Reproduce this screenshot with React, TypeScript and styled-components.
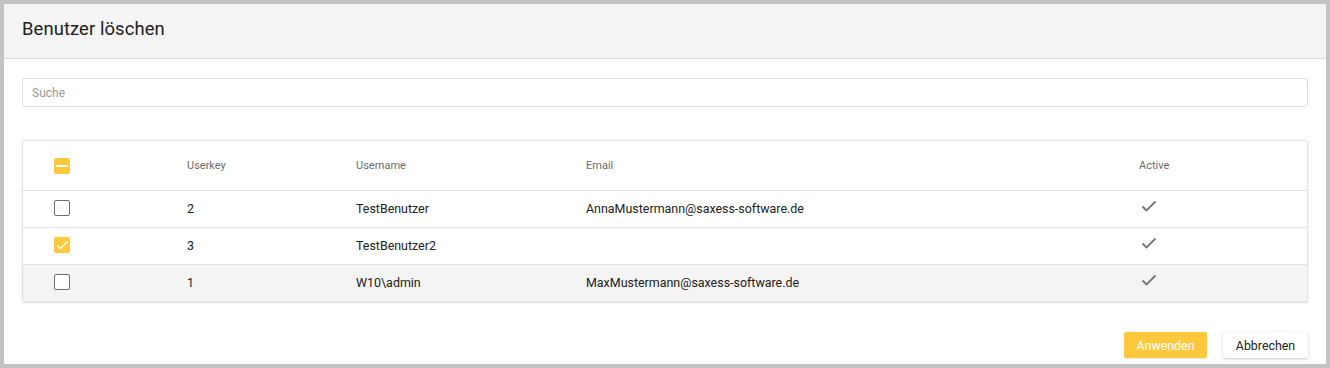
import React from "react";
import styled, { createGlobalStyle } from "styled-components";

const Global = createGlobalStyle`
  html, body { margin: 0; padding: 0; }
  body { font-family: Roboto, "Liberation Sans", Arial, sans-serif; background: #c3c3c3; }
  * { box-sizing: border-box; }
`;

const Frame = styled.div`
  width: 1330px;
  height: 368px;
  padding: 4px;
  background: #c3c3c3;
`;

const Dialog = styled.div`
  width: 1322px;
  height: 360px;
  background: #ffffff;
  display: flex;
  flex-direction: column;
`;

const Header = styled.div`
  height: 55px;
  background: #f4f4f4;
  border-bottom: 1px solid #dcdcdc;
  display: flex;
  align-items: center;
  padding: 0 18px 5px;
`;

const Title = styled.h1`
  margin: 0;
  font-size: 18.4px;
  font-weight: 400;
  color: #212121;
  letter-spacing: 0.1px;
`;

const Body = styled.div`
  padding: 19px 18px 0;
  display: flex;
  flex-direction: column;
`;

const Search = styled.input`
  height: 29px;
  width: 100%;
  border: 1px solid #e0e0e0;
  border-radius: 3px;
  padding: 0 9px;
  font-family: Roboto, "Liberation Sans", Arial, sans-serif;
  font-size: 12px;
  color: #212121;
  outline: none;
  &::placeholder { color: #9a9a9a; }
`;

const Table = styled.div`
  margin-top: 33px;
  border: 1px solid #e2e2e2;
  border-radius: 2px;
  box-shadow: 0 1px 2px rgba(0, 0, 0, 0.14);
`;

const Row = styled.div<{ $head?: boolean; $shade?: boolean }>`
  display: grid;
  grid-template-columns: 164px 169px 230px 553px 1fr;
  align-items: center;
  height: ${(p) => (p.$head ? "50px" : "37px")};
  padding-bottom: ${(p) => (p.$head ? "0" : "2px")};
  background: ${(p) => (p.$shade ? "#f4f4f4" : "#ffffff")};
  border-bottom: 1px solid #e0e0e0;
  &:last-child { border-bottom: none; height: 36px; }
  font-size: ${(p) => (p.$head ? "11px" : "12.45px")};
  color: ${(p) => (p.$head ? "#6b6b6b" : "#212121")};
`;

const CheckCell = styled.div`
  padding-left: 31px;
  display: flex;
  align-items: center;
`;

const Cell = styled.div`
  white-space: nowrap;
`;

const ActiveCell = styled.div<{ $head?: boolean }>`
  padding-left: ${(p) => (p.$head ? "0" : "2px")};
  padding-bottom: ${(p) => (p.$head ? "0" : "5px")};
  display: flex;
  align-items: center;
`;

const Box = styled.span<{ $on?: boolean }>`
  width: 16px;
  height: 16px;
  border-radius: 2px;
  display: inline-flex;
  align-items: center;
  justify-content: center;
  background: ${(p) => (p.$on ? "#ffc83d" : "#ffffff")};
  border: ${(p) => (p.$on ? "none" : "1.5px solid #6e6e6e")};
`;

const Footer = styled.div`
  display: flex;
  justify-content: flex-end;
  gap: 16px;
  margin-top: 30px;
`;

const Button = styled.button<{ $primary?: boolean }>`
  height: 26px;
  width: ${(p) => (p.$primary ? "83px" : "85px")};
  padding: 0;
  border: none;
  border-radius: 2px;
  font-family: Roboto, "Liberation Sans", Arial, sans-serif;
  font-size: 12.4px;
  background: ${(p) => (p.$primary ? "#ffc83d" : "#ffffff")};
  color: ${(p) => (p.$primary ? "#ffffff" : "#212121")};
  box-shadow: ${(p) =>
    p.$primary ? "0 1px 1px rgba(0,0,0,0.08)" : "0 1px 3px rgba(0,0,0,0.22)"};
`;

const Check = ({ color, w = 12 }: { color: string; w?: number }) => (
  <svg width={w} height={w * 0.75} viewBox="0 0 16 12" fill="none">
    <polyline points="1.5,6.5 5.5,10.5 14.5,1.5" stroke={color} strokeWidth="1.8" />
  </svg>
);

const Dash = () => (
  <svg width="12" height="4" viewBox="0 0 12 4">
    <rect x="0" y="1" width="12" height="2" fill="#ffffff" />
  </svg>
);

const users = [
  { key: "2", name: "TestBenutzer", email: "AnnaMustermann@saxess-software.de", sel: false },
  { key: "3", name: "TestBenutzer2", email: "", sel: true },
  { key: "1", name: "W10\\admin", email: "MaxMustermann@saxess-software.de", sel: false },
];

export default function App() {
  return (
    <>
      <Global />
      <Frame>
        <Dialog>
          <Header>
            <Title>Benutzer löschen</Title>
          </Header>
          <Body>
            <Search placeholder="Suche" />
            <Table>
              <Row $head>
                <CheckCell>
                  <Box $on>
                    <Dash />
                  </Box>
                </CheckCell>
                <Cell>Userkey</Cell>
                <Cell>Username</Cell>
                <Cell>Email</Cell>
                <ActiveCell $head>Active</ActiveCell>
              </Row>
              {users.map((u, i) => (
                <Row key={u.key} $shade={i === users.length - 1}>
                  <CheckCell>
                    <Box $on={u.sel}>{u.sel && <Check color="#ffffff" w={13} />}</Box>
                  </CheckCell>
                  <Cell>{u.key}</Cell>
                  <Cell>{u.name}</Cell>
                  <Cell>{u.email}</Cell>
                  <ActiveCell>
                    <Check color="#757575" w={16} />
                  </ActiveCell>
                </Row>
              ))}
            </Table>
            <Footer>
              <Button $primary>Anwenden</Button>
              <Button>Abbrechen</Button>
            </Footer>
          </Body>
        </Dialog>
      </Frame>
    </>
  );
}
